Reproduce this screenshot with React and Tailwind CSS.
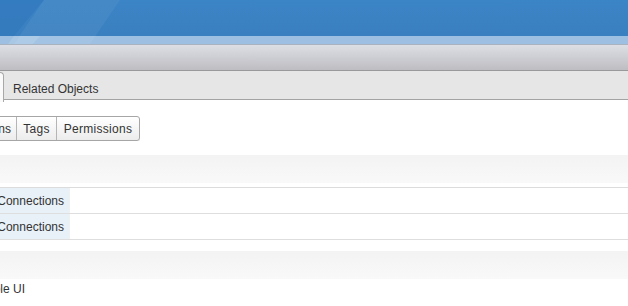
import React from "react";

const font = { fontFamily: '"Liberation Sans", Arial, sans-serif' };

function SectionHeader() {
  return <div className="h-[28px] bg-gradient-to-b from-[#f3f3f3] to-[#f9f9f9]"></div>;
}

function PropRow({ label }) {
  return (
    <div className="flex h-[26px] border-b border-[#dedede]">
      <div className="w-[69px] flex justify-end items-center overflow-hidden bg-[#e8f0f8] pr-[5px] whitespace-nowrap">
        Outgoing {label}
      </div>
      <div className="flex-1 border-l border-[#f0f0f0] bg-white"></div>
    </div>
  );
}

export default function App() {
  return (
    <div className="w-[628px] h-[306px] overflow-hidden bg-white text-[12px] text-[#333]" style={font}>
      {/* Top banner */}
      <div className="relative h-[45px]">
        <div className="h-[36px] bg-gradient-to-b from-[#3b84c5] to-[#3a80c0]"></div>
        <div className="h-[8px] bg-[#9dc0e2]"></div>
        <div className="h-px bg-[#a9b3c0]"></div>
        <svg className="absolute inset-0" width="628" height="45" viewBox="0 0 628 45">
          <polygon points="0,0 44,0 14,36 0,36" fill="#2f76bb" opacity="0.55" />
          <polygon points="44,0 120,0 90,44 14,44" fill="#ffffff" opacity="0.05" />
          <polygon points="14,36 40,36 33,44 8,44" fill="#ffffff" opacity="0.12" />
        </svg>
      </div>

      {/* Toolbar */}
      <div className="h-[26px] bg-gradient-to-b from-[#dcdfe5] to-[#bebdc2] border-b border-[#999]"></div>

      {/* Tab bar */}
      <div className="flex h-[29px] bg-[#e6e6e6] border-b border-[#a3a3a3]">
        <div className="w-[4px] h-[30px] bg-[#fafafa] border-r border-t border-[#a8a8a8] rounded-tr-[6px] mt-px"></div>
        <div className="pl-[9px] pt-[11px] leading-[14px]">Related Objects</div>
      </div>

      {/* Sub tabs */}
      <div className="flex mt-[16px] h-[25px]">
        <div className="w-[140px] flex justify-end overflow-hidden">
          <div className="flex shrink-0 border border-[#a6a6a6] rounded-[3px] bg-gradient-to-b from-white to-[#ececec] shadow-[0_1px_1px_rgba(0,0,0,0.12)]">
            <div className="pl-[6px] pr-[5px] flex items-center whitespace-nowrap border-r border-[#b5b5b5]">Alarm Definitions</div>
            <div className="w-[40px] flex items-center justify-center border-r border-[#b5b5b5] tracking-[0.3px]">Tags</div>
            <div className="w-[82px] flex items-center justify-center tracking-[0.3px]">Permissions</div>
          </div>
        </div>
      </div>

      <div className="mt-[14px]">
        <SectionHeader />
      </div>
      <div className="mt-[4px] border-t border-[#dcdcdc]">
        <PropRow label="Connections" />
        <PropRow label="Connections" />
      </div>

      <div className="mt-[11px]">
        <SectionHeader />
      </div>
      <div className="flex">
        <div className="w-[25px] flex justify-end overflow-hidden whitespace-nowrap pt-[1px]">Console UI</div>
      </div>
    </div>
  );
}
